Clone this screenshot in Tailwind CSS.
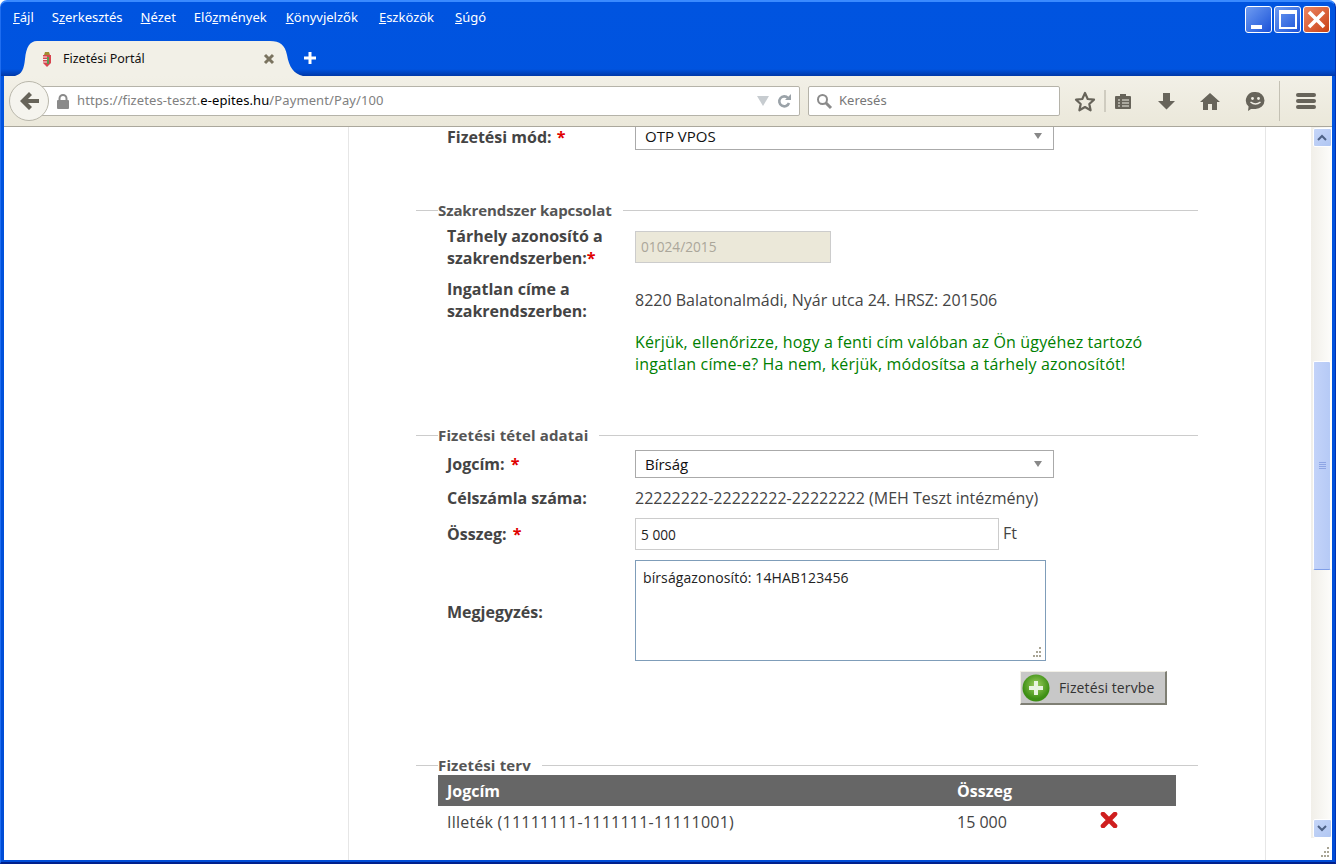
<!DOCTYPE html>
<html><head><meta charset="utf-8"><script src="https://cdn.jsdelivr.net/npm/@tailwindcss/browser@4"></script></head>
<body class="m-0 overflow-hidden bg-white">
<div class="w-[1336px] h-[864px] flex flex-col overflow-hidden rounded-t-[7px] border-t-2 border-t-[#3a8aff] border-l border-l-[#1f6df0] border-r border-r-[#0032b4] border-b-2 border-b-[#00208c] bg-gradient-to-b from-[#0054e0] to-[#004cd6] relative">
  <!-- menu bar -->
  <div class="h-[38px] flex items-start shrink-0 pl-[12px] pt-[7px] leading-[17px] text-white">
    <div class="flex gap-[18px] font-['Noto_Sans',sans-serif] text-[13px]">
      <span><u>F</u>ájl</span><span>S<u>z</u>erkesztés</span><span><u>N</u>ézet</span><span>Elő<u>z</u>mények</span><span class="ml-[1px]"><u>K</u>önyvjelzők</span><span class="ml-[3px]"><u>E</u>szközök</span><span class="ml-[3px]"><u>S</u>úgó</span>
    </div>
    <div class="ml-auto mr-[5px] -mt-[3px] flex gap-[2px]">
      <div class="w-[27px] h-[27px] rounded-[3px] border border-white bg-gradient-to-br from-[#6f9bf0] to-[#1a50d8] relative"><div class="absolute left-[5px] bottom-[3px] w-[11px] h-[4px] bg-white"></div></div>
      <div class="w-[27px] h-[27px] rounded-[3px] border border-white bg-gradient-to-br from-[#6f9bf0] to-[#1a50d8] relative"><div class="absolute left-[4px] top-[3px] w-[18px] h-[19px] border-2 border-t-4 border-white"></div></div>
      <div class="w-[27px] h-[27px] rounded-[3px] border border-white bg-gradient-to-br from-[#ec8560] to-[#c8400f] flex items-center justify-center"><svg width="21" height="21" viewBox="0 0 21 21"><path d="M3 3L18 18M18 3L3 18" stroke="#fff" stroke-width="3.6"/></svg></div>
    </div>
  </div>
  <!-- tab strip -->
  <div class="h-[36px] shrink-0 pl-[14px] flex items-end bg-[linear-gradient(to_bottom,transparent_29px,#0038a8_36px)]">
    <svg width="25" height="35" viewBox="0 0 25 35" class="block"><path d="M0 35C7 33 9 28 10 18C11 6 15 0 22 0H25V35Z" fill="#f2f0e7"/></svg>
    <div class="w-[230px] h-[35px] bg-[#f2f0e7] flex items-center pl-[2px] pt-[2px] text-[12.5px] text-[#111] font-['Noto_Sans',sans-serif]">
      <svg width="10" height="17" viewBox="0 0 10 17" class="mr-[11px]"><path d="M3 1h4l1 3H2z" fill="#a08a30"/><path d="M1 4h8v8l-4 4-4-4z" fill="#d8444e"/><path d="M1 6h4M1 8.500h4M1 11h4" stroke="#f4e8e8" stroke-width="1"/><path d="M6 6v7" stroke="#5a9a50" stroke-width="2"/></svg>
      <span>Fizetési Portál</span>
    </div>
    <div class="relative w-[33px] h-[35px]">
      <svg width="33" height="35" viewBox="0 0 33 35" class="block"><path d="M0 0C10 0 15 4 17 14C19 26 24 33 33 35H0Z" fill="#f2f0e7"/></svg>
      <svg width="12" height="12" viewBox="0 0 12 12" class="absolute -left-[7px] top-[12px]"><path d="M2 2L10 10M10 2L2 10" stroke="#7a735f" stroke-width="3"/></svg>
    </div>
    <svg width="16" height="16" viewBox="0 0 16 16" class="-ml-[1px] mb-[10px]"><path d="M8 2v12M2 8h12" stroke="#fff" stroke-width="3"/></svg>
  </div>
  <!-- client -->
  <div class="flex-1 ml-[3px] mr-[3px] mb-[2px] flex flex-col bg-white min-h-0 relative">
    <!-- toolbar -->
    <div class="h-[51px] shrink-0 bg-gradient-to-b from-[#f2f0e7] to-[#ebe8da] border-b border-[#aaa79c] flex items-center relative">
      <div class="absolute left-[5px] top-[5px] w-[40px] h-[40px] rounded-full bg-[#f5f4ee] border border-[#b9b7ab] flex items-center justify-center z-10">
        <svg width="19" height="18" viewBox="0 0 19 18"><path d="M9 0L0 9l9 9 3-3-4-4h11V7H8l4-4z" fill="#67645a"/></svg>
      </div>
      <div class="ml-[25px] w-[771px] h-[30px] bg-white border border-[#b5b3a9] rounded-[2px] flex items-center pl-[27px] pr-[7px] text-[13px] tracking-[0.1px] text-[#808080] font-['Noto_Sans',sans-serif]">
        <svg width="14" height="15" viewBox="0 0 14 15" class="mr-[7px] -ml-[1px]"><rect x="1" y="6" width="12" height="9" rx="1" fill="#8a8a8a"/><path d="M3.500 6.500V4.500a3.500 3.500 0 0 1 7 0v2" fill="none" stroke="#8a8a8a" stroke-width="2"/></svg>
        <span>https://fizetes-teszt.<span class="text-black">e-epites.hu</span>/Payment/Pay/100</span>
        <svg width="12" height="10" viewBox="0 0 12 10" class="ml-auto mr-[8px]"><path d="M0 0h12L6 10z" fill="#c7ccd0"/></svg>
        <svg width="15" height="15" viewBox="0 0 15 15"><path d="M12 9a5 5 0 1 1-1-5" fill="none" stroke="#9aa2a8" stroke-width="2.600"/><path d="M8 6h6V0z" fill="#9aa2a8"/></svg>
      </div>
      <div class="ml-[8px] w-[252px] h-[30px] bg-white border border-[#b5b3a9] rounded-[2px] flex items-center pl-[7px] text-[13px] text-[#777] font-['Noto_Sans',sans-serif]">
        <svg width="17" height="17" viewBox="0 0 17 17" class="mr-[6px]"><circle cx="6.500" cy="6.500" r="4.500" fill="none" stroke="#8b8b8b" stroke-width="2"/><path d="M10 10l5 5" stroke="#8b8b8b" stroke-width="3"/></svg>
        <span>Keresés</span>
      </div>
      <svg width="22" height="21" viewBox="0 0 22 21" class="ml-[14px]"><path d="M11 2l2.700 6 6.300.7-4.700 4.300 1.300 6.300L11 16l-5.600 3.300L6.700 13 2 8.700 8.300 8z" fill="none" stroke="#67645a" stroke-width="2.200" stroke-linejoin="round"/></svg>
      <div class="ml-[8px] w-[2px] h-[22px] bg-[#cfccc0]"></div>
      <svg width="18" height="18" viewBox="0 0 18 18" class="ml-[8px]"><path d="M2 4h4V2h6v2h4a1 1 0 0 1 1 1v11a1 1 0 0 1-1 1H2a1 1 0 0 1-1-1V5a1 1 0 0 1 1-1z" fill="#67645a"/><path d="M4 8h2M8 8h7M4 11h2M8 11h7M4 14h2M8 14h7" stroke="#f0eee4" stroke-width="1.200"/></svg>
      <svg width="19" height="18" viewBox="0 0 19 18" class="ml-[25px]"><path d="M6 1h7v8h5l-8.500 8.500L1 9h5z" fill="#67645a"/></svg>
      <svg width="22" height="19" viewBox="0 0 22 19" class="ml-[23px]"><path d="M11 1L1 10h3v8h5v-6h4v6h5v-8h3z" fill="#67645a"/></svg>
      <svg width="21" height="20" viewBox="0 0 21 20" class="ml-[24px]"><path d="M10.500 1a9 8.500 0 0 1 0 17H6l-3 2 .6-4.400A8.500 8.500 0 0 1 10.500 1z" fill="#67645a"/><circle cx="7.500" cy="7.500" r="1.400" fill="#f0eee4"/><circle cx="13.500" cy="7.500" r="1.400" fill="#f0eee4"/><path d="M5.500 11q5 4 10 0" stroke="#f0eee4" stroke-width="1.500" fill="none"/></svg>
      <div class="ml-[13px] w-[1px] h-[40px] bg-[#c4c1b4]"></div>
      <div class="ml-[16px] w-[20px] flex flex-col gap-[2px]"><div class="h-[4px] rounded-[2px] bg-[#67645a]"></div><div class="h-[4px] rounded-[2px] bg-[#67645a]"></div><div class="h-[4px] rounded-[2px] bg-[#67645a]"></div></div>
    </div>
    <!-- viewport -->
    <div class="flex-1 flex min-h-0 relative">
      <div class="flex-1 min-w-0 overflow-hidden font-['Open_Sans',sans-serif] text-[16px] text-[#444]">
        <div class="ml-[344px] w-[918px] h-full border-x border-[#e6e6e6] pl-[67px]">
          <div class="w-[782px]">
            <!-- first row -->
            <div class="flex h-[23px] items-center">
              <div class="w-[31px]"></div>
              <div class="w-[188px] font-bold pb-[4px]">Fizetési mód: <span class="text-[#e00000] ml-[1px]">*</span></div>
              <div class="w-[419px] h-[23px] border border-[#aaa] border-t-0 flex items-center justify-between pl-[9px] pr-[11px] pb-[4px] text-[15px] text-[#111]"><span>OTP VPOS</span><svg width="8" height="6" viewBox="0 0 8 6"><path d="M0 0h8L4 6z" fill="#888"/></svg></div>
            </div>
            <!-- section 1 -->
            <div class="mt-[51px] flex items-center h-[18px]"><div class="w-[22px] h-px bg-[#ccc]"></div><div class="font-bold text-[15px] tracking-[-0.1px] text-[#555]">Szakrendszer kapcsolat</div><div class="flex-1 ml-[11px] h-px bg-[#ccc]"></div></div>
            <div class="flex mt-[6px] leading-[22px]">
              <div class="w-[31px] shrink-0"></div>
              <div class="w-[188px] shrink-0 font-bold">Tárhely azonosító a<br>szakrendszerben:<span class="text-[#e00000]">*</span></div>
              <div class="w-[196px] h-[32px] mt-[6px] bg-[#ebe8d9] border border-[#ccc] pl-[5px] leading-[30px] text-[13.7px] text-[#aaa69a]">01024/2015</div>
            </div>
            <div class="flex mt-[9px] leading-[22px]">
              <div class="w-[31px] shrink-0"></div>
              <div class="w-[188px] shrink-0 font-bold">Ingatlan címe a<br>szakrendszerben:</div>
              <div class="flex-1 pt-[11px]">
                <div>8220 Balatonalmádi, Nyár utca 24. HRSZ: 201506</div>
                <div class="mt-[20px] text-[#008000] tracking-[0.17px]">Kérjük, ellenőrizze, hogy a fenti cím valóban az Ön ügyéhez tartozó<br>ingatlan címe-e? Ha nem, kérjük, módosítsa a tárhely azonosítót!</div>
              </div>
            </div>
            <!-- section 2 -->
            <div class="mt-[51px] flex items-center h-[18px]"><div class="w-[22px] h-px bg-[#ccc]"></div><div class="font-bold text-[15px] tracking-[0.15px] text-[#555]">Fizetési tétel adatai</div><div class="flex-1 ml-[11px] h-px bg-[#ccc]"></div></div>
            <div class="flex mt-[6px] h-[28px] items-center">
              <div class="w-[31px]"></div>
              <div class="w-[188px] font-bold">Jogcím: <span class="text-[#e00000] ml-[2px]">*</span></div>
              <div class="w-[419px] h-[28px] border border-[#aaa] flex items-center justify-between pl-[9px] pr-[11px] text-[15px] text-[#111]"><span>Bírság</span><svg width="8" height="6" viewBox="0 0 8 6"><path d="M0 0h8L4 6z" fill="#888"/></svg></div>
            </div>
            <div class="flex mt-[6px] h-[28px] items-center">
              <div class="w-[31px]"></div>
              <div class="w-[188px] font-bold">Célszámla száma:</div>
              <div>22222222-22222222-22222222 (MEH Teszt intézmény)</div>
            </div>
            <div class="flex h-[32px] mt-[6px] items-center">
              <div class="w-[31px]"></div>
              <div class="w-[188px] font-bold">Összeg: <span class="text-[#e00000] ml-[2px]">*</span></div>
              <div class="w-[364px] h-[32px] border border-[#ccc] pl-[5px] leading-[32px] text-[13.7px] text-[#222]">5 000</div>
              <div class="ml-[4px] -mt-[2px]">Ft</div>
            </div>
            <div class="flex h-[101px] mt-[10px] items-center">
              <div class="w-[31px]"></div>
              <div class="w-[188px] font-bold pt-[2px]">Megjegyzés:</div>
              <div class="w-[411px] h-[101px] border border-[#7f9db9] pl-[7px] pt-[8px] text-[14px] tracking-[0.1px] leading-[18px] text-[#222] relative">bírságazonosító: 14HAB123456
                <svg width="10" height="10" viewBox="0 0 10 10" class="absolute right-[4px] bottom-[3px]"><path d="M8 0h2v2H8zM5 4h2v2H5zM8 4h2v2H8zM2 8h2v2H2zM5 8h2v2H5zM8 8h2v2H8z" fill="#a8a494"/></svg>
              </div>
            </div>
            <div class="flex justify-end pr-[31px] mt-[10px]">
              <div class="w-[147px] h-[34px] bg-[#c8c8c8] border-t border-l border-[#f2f0e7] border-r-2 border-b-2 border-r-[#7f7f74] border-b-[#7f7f74] flex items-center text-[14px] tracking-[0.1px] text-[#333]">
                <svg width="28" height="28" viewBox="0 0 28 28" class="ml-[1px]"><defs><radialGradient id="g" cx="50%" cy="40%"><stop offset="0" stop-color="#9fd060"/><stop offset="1" stop-color="#3d8f14"/></radialGradient></defs><circle cx="14" cy="14" r="13.500" fill="url(#g)"/><path d="M14 7v14M7 14h14" stroke="#e8f4df" stroke-width="4"/></svg>
                <span class="ml-[9px]">Fizetési tervbe</span>
              </div>
            </div>
            <!-- section 3 -->
            <div class="mt-[51px] flex items-center h-[18px]"><div class="w-[22px] h-px bg-[#ccc]"></div><div class="font-bold text-[15px] tracking-[0.15px] text-[#555]">Fizetési terv</div><div class="flex-1 ml-[11px] h-px bg-[#ccc]"></div></div>
            <div class="ml-[22px] w-[738px] h-[31px] mt-[1px] bg-[#666] flex items-center pl-[9px] text-white font-bold"><div class="w-[510px]">Jogcím</div><div>Összeg</div></div>
            <div class="ml-[22px] w-[738px] h-[33px] flex items-center pl-[9px] pb-[2px]"><div class="w-[510px] tracking-[0.23px]">Illeték (11111111-1111111-11111001)</div><div class="w-[143px]">15 000</div>
              <svg width="18" height="16" viewBox="0 0 18 16" class="-mt-[3px]"><path d="M3 2l12 12M15 2L3 14" stroke="#cf1f1f" stroke-width="4.600" stroke-linecap="round"/></svg>
            </div>
          </div>
        </div>
      </div>
      <!-- scrollbar -->
      <div class="w-[21px] shrink-0 bg-white relative">
        <div class="h-[711px] bg-gradient-to-r from-[#f1efe9] to-[#fdfdfb] flex flex-col items-center justify-between pl-[1px] pt-[1px]">
          <div class="w-[19px] h-[19px] rounded-[2px] border border-white bg-gradient-to-br from-[#c6d6f8] to-[#b0c6f2] flex items-center justify-center"><svg width="10" height="7" viewBox="0 0 10 7"><path d="M1 6l4-4 4 4" fill="none" stroke="#4d6185" stroke-width="2"/></svg></div>
          <div class="w-[19px] h-[19px] rounded-[2px] border border-white bg-gradient-to-br from-[#c6d6f8] to-[#b0c6f2] flex items-center justify-center"><svg width="10" height="7" viewBox="0 0 10 7"><path d="M1 1l4 4 4-4" fill="none" stroke="#4d6185" stroke-width="2"/></svg></div>
        </div>
        <div class="absolute top-[234px] left-[2px] w-[18px] h-[209px] rounded-[2px] border border-white border-b-[#7f9ee8] bg-gradient-to-r from-[#c3d3f9] to-[#b6caf6] flex items-center justify-center"><div class="w-[7px] flex flex-col gap-[1px]"><div class="h-px bg-[#8ea5e4]"></div><div class="h-px bg-[#8ea5e4]"></div><div class="h-px bg-[#8ea5e4]"></div><div class="h-px bg-[#8ea5e4]"></div></div></div>
        <svg width="10" height="10" viewBox="0 0 10 10" class="absolute right-[3px] bottom-[3px]"><path d="M8 0h2v2H8zM5 4h2v2H5zM8 4h2v2H8zM2 8h2v2H2zM5 8h2v2H5zM8 8h2v2H8z" fill="#a8a494"/></svg>
      </div>
    </div>
  </div>
</div>
</body></html>
